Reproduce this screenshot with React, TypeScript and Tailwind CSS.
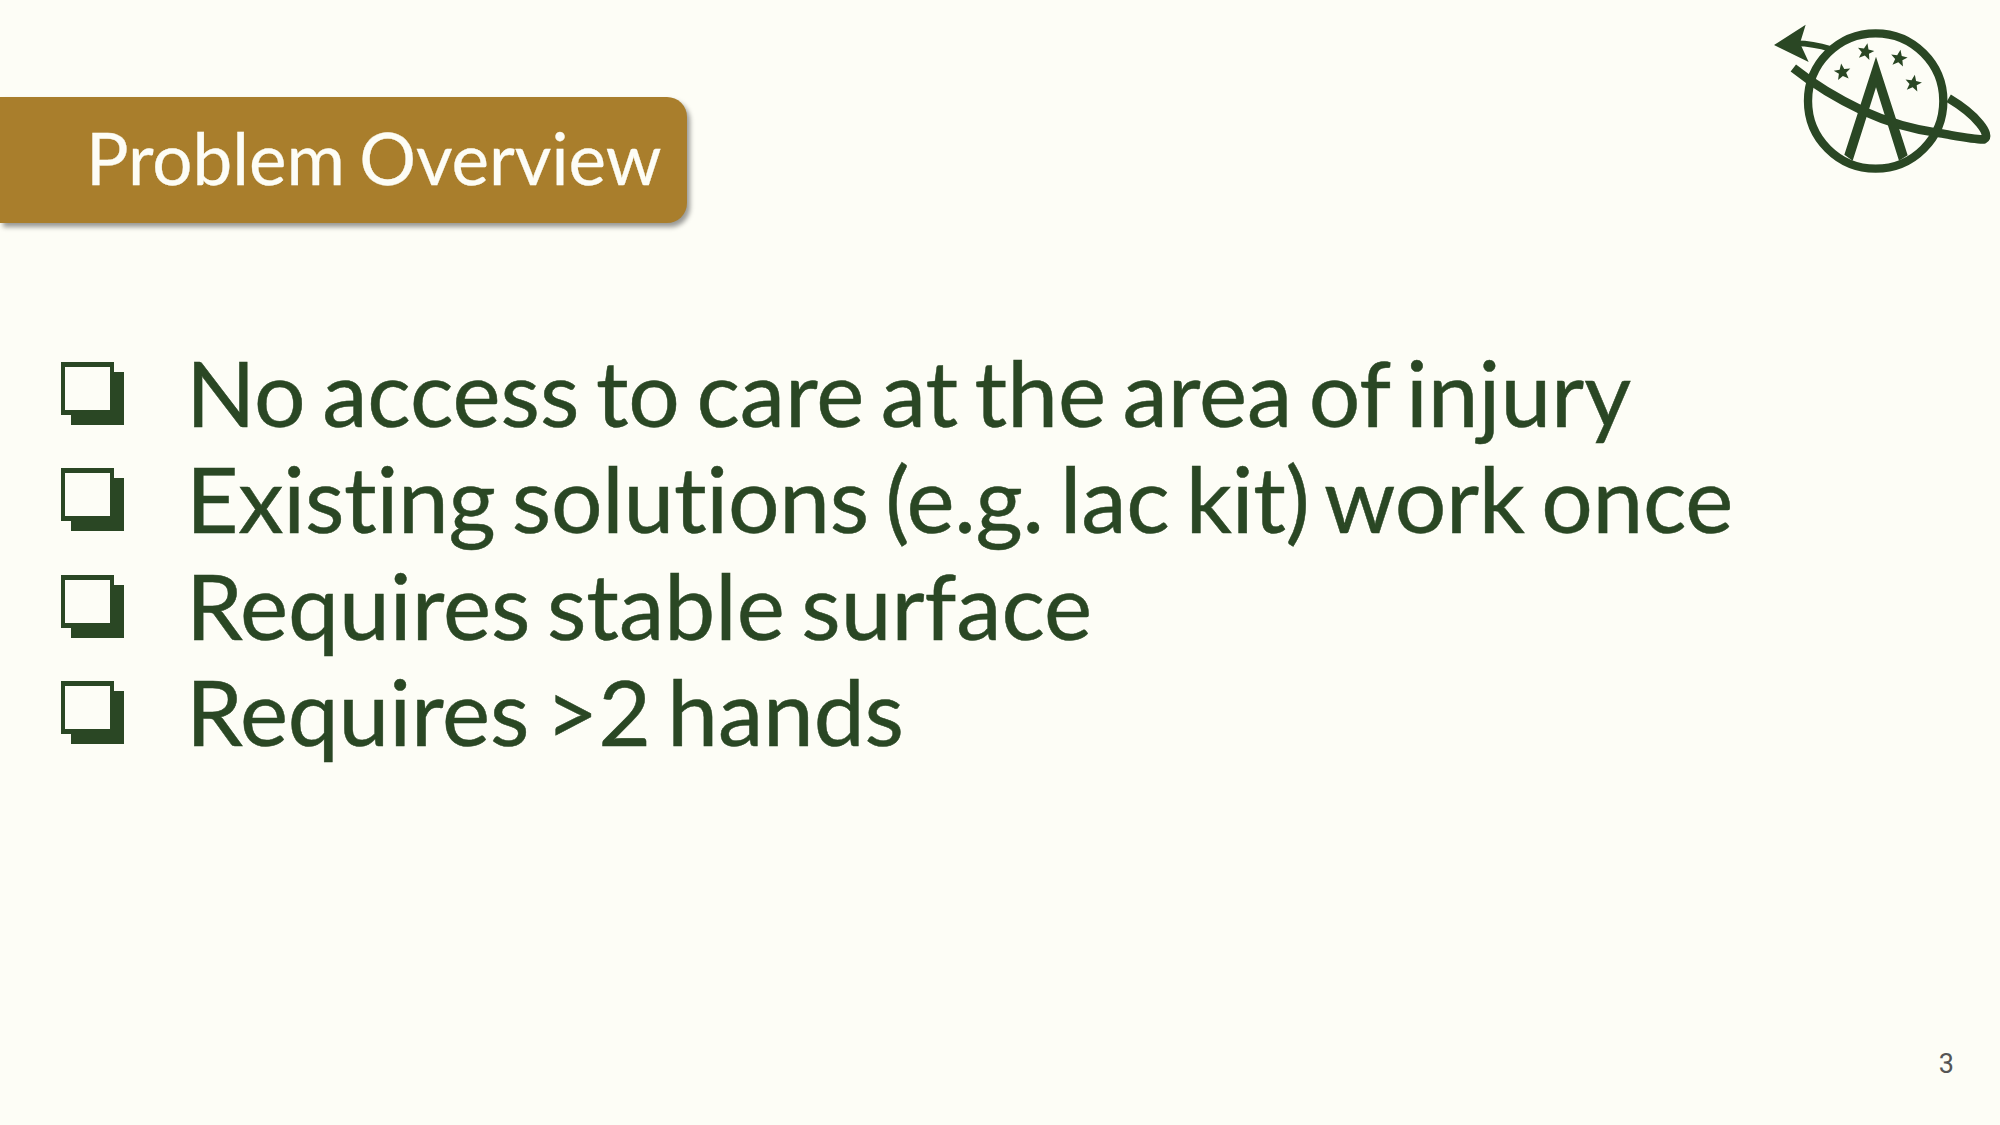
const items = [
  { text: "No access to care at the area of injury", tracking: "tracking-[-0.03px]" },
  { text: "Existing solutions (e.g. lac kit) work once", tracking: "tracking-[-0.27px]" },
  { text: "Requires stable surface", tracking: "tracking-normal" },
  { text: "Requires >2 hands", tracking: "tracking-[-0.15px]" },
];

const stars = [
  { x: 347, y: 155, r: 12 },
  { x: 447, y: 175, r: 10 },
  { x: 277, y: 216, r: -8 },
  { x: 490, y: 250, r: 10 },
];

function Logo() {
  return (
    <svg viewBox="0 0 750 570" className="w-[250px] h-[190px] shrink-0" fill="none" stroke="#2a4724">
      <circle cx="377" cy="303" r="203" strokeWidth="25" />
      {/* orbit */}
      <path
        d="M130 204 C 190 252 260 295 340 333 C 420 370 500 390 570 400 C 630 410 680 420 702 418 C 725 405 680 345 596 295"
        strokeWidth="26"
      />
      {/* arrow */}
      <path d="M140 130 C 175 130 210 137 242 147" strokeWidth="17" />
      <path d="M72 135 L167 74 L150 130 L176 186 Z" fill="#2a4724" stroke="none" />
      {/* letter A */}
      <path
        d="M378 170 L283 464 L308 482 L378 262 L447 482 L473 466 Z"
        fill="#2a4724"
        stroke="none"
      />
      {stars.map((s) => (
        <path
          key={s.x}
          transform={`translate(${s.x} ${s.y}) rotate(${s.r})`}
          d="M0 -26 L7 -8 L25 -7 L11 4 L16 22 L0 12 L-16 22 L-11 4 L-25 -7 L-7 -8 Z"
          fill="#2a4724"
          stroke="none"
        />
      ))}
    </svg>
  );
}

export default function App() {
  return (
    <div className="w-[2000px] h-[1125px] bg-[#fdfdf6] flex flex-col overflow-hidden font-['Lato',sans-serif] [font-variant-ligatures:none]">
      <div className="flex justify-between items-start">
        <div className="mt-[97px] w-[687px] h-[126px] bg-[#a97e2c] rounded-r-[20px] shadow-[3px_4px_5px_rgba(0,0,0,0.4)] pl-[86px] pb-[5px] flex items-center">
          <span className="text-[71px] leading-none [word-spacing:-4px] [-webkit-text-stroke:0.3px] text-[#fdfdf6] whitespace-nowrap">Problem Overview</span>
        </div>
        <Logo />
      </div>

      <ul className="mt-[116px] pl-[61px] flex flex-col">
        {items.map((item) => (
          <li key={item.text} className="flex items-center h-[106.5px] text-[#2a4724]">
            <div className="w-[53px] h-[53px] bg-[#fdfdf6] border-x-[4px] border-y-[5px] border-[#2a4724] shadow-[10px_10px_0_#2a4724] shrink-0 -translate-y-[4px]" />
            <span className={`ml-[72px] text-[91px] leading-none [word-spacing:-6.7px] [-webkit-text-stroke:0.5px] whitespace-nowrap -translate-y-[1px] ${item.tracking}`}>{item.text}</span>
          </li>
        ))}
      </ul>

      <div className="mt-auto mb-[47px] pr-[46px] flex justify-end">
        <span className="font-['Roboto',sans-serif] text-[27px] leading-none text-[#555555]">3</span>
      </div>
    </div>
  );
}
